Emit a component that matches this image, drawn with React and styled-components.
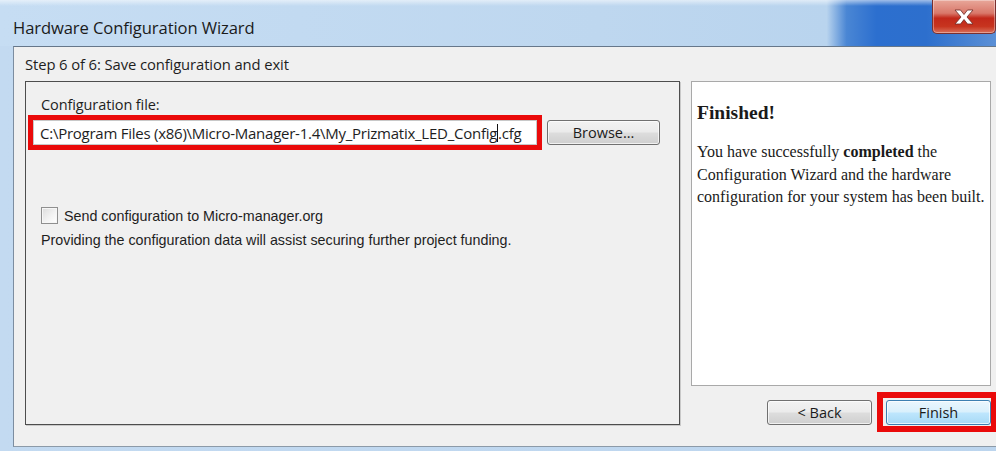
import React from "react";
import styled, { createGlobalStyle } from "styled-components";

const GlobalStyle = createGlobalStyle`
  html, body {
    margin: 0;
    padding: 0;
    background: #bfd7ef;
  }
  * {
    box-sizing: border-box;
  }
`;

const Frame = styled.div`
  width: 996px;
  height: 451px;
  overflow: hidden;
  display: flex;
  flex-direction: column;
  background: linear-gradient(to right, #c3daf1 0%, #bcd5ee 100%);
  font-family: "Open Sans", "Noto Sans", sans-serif;
  color: #1e1e1e;
`;

const TitleBar = styled.div`
  height: 46px;
  flex-shrink: 0;
  display: flex;
  justify-content: space-between;
  padding-left: 13px;
  background:
    linear-gradient(to bottom, rgba(255, 255, 255, 0.55) 0px, rgba(255, 255, 255, 0) 6px),
    linear-gradient(
      to right,
      #c6ddf3 0%,
      #bed7ef 60%,
      #b9d4ee 83%,
      #4a86d4 85%,
      #2c6fcf 88%,
      #2d6fcd 93%,
      #5b90d6 100%
    );
`;

const Title = styled.div`
  align-self: center;
  margin-top: 8px;
  font-size: 16.6px;
  letter-spacing: -0.1px;
  color: #1b1b1b;
`;

const CloseButton = styled.div`
  width: 64px;
  height: 34px;
  border: 1px solid #7a3030;
  border-top: none;
  border-radius: 0 0 5px 5px;
  display: flex;
  align-items: center;
  justify-content: center;
  background: linear-gradient(
    to bottom,
    #e8a79a 0%,
    #d9786a 40%,
    #c2281a 55%,
    #c7341f 80%,
    #d9705a 100%
  );
  box-shadow: inset 0 0 0 1px rgba(255, 255, 255, 0.35);
`;

const Client = styled.div`
  flex: 1;
  margin: 0 0 4px 13px;
  border-top: 1px solid #66778a;
  border-left: 1px solid #7c8da0;
  border-bottom: 1px solid #8c9aa8;
  background: #f0f0f0;
  display: flex;
  flex-direction: column;
  padding: 0 5px 0 11px;
`;

const StepLabel = styled.div`
  height: 34px;
  display: flex;
  align-items: center;
  font-size: 14.8px;
  letter-spacing: -0.1px;
`;

const Body = styled.div`
  display: flex;
  gap: 11px;
`;

const LeftPanel = styled.div`
  width: 655px;
  height: 344px;
  border: 1px solid #4d4d4d;
  box-shadow: 1px 1px 0 #c9c9c9;
  padding: 13px 10px 0 15px;
  display: flex;
  flex-direction: column;
`;

const FieldLabel = styled.div`
  font-size: 14.5px;
  letter-spacing: -0.1px;
  line-height: 19px;
  margin-bottom: 1px;
`;

const FieldRow = styled.div`
  display: flex;
  align-items: center;
  gap: 5px;
  margin-left: -13px;
`;

const Highlight = styled.div`
  border: 5px solid #ea0a0a;
  display: flex;
`;

const PathField = styled.div`
  width: 504px;
  height: 25px;
  background: #fff;
  border: 1px solid #c8c8c8;
  display: flex;
  align-items: center;
  padding-left: 6px;
  font-size: 15px;
  letter-spacing: -0.25px;
  white-space: nowrap;
`;

const Caret = styled.span`
  display: inline-block;
  width: 1px;
  height: 18px;
  background: #111;
  vertical-align: middle;
`;

const Button = styled.div`
  width: ${p => p.w || 105}px;
  height: 25px;
  border: 1px solid ${p => (p.primary ? "#3c7fb1" : "#707070")};
  border-radius: 3px;
  display: flex;
  align-items: center;
  justify-content: center;
  font-size: 14.5px;
  color: #1b1b1b;
  background: ${p =>
    p.primary
      ? "linear-gradient(to bottom, #eaf6fd 0%, #d9f0fc 48%, #bee6fd 52%, #a7d9f5 100%)"
      : "linear-gradient(to bottom, #f2f2f2 0%, #ebebeb 48%, #dddddd 52%, #cfcfcf 100%)"};
  box-shadow: inset 0 0 0 1px rgba(255, 255, 255, 0.7);
`;

const CheckRow = styled.div`
  display: flex;
  align-items: center;
  gap: 6px;
  margin-top: 57px;
  font-family: "Liberation Sans", Arial, sans-serif;
  font-size: 14.3px;
`;

const CheckBox = styled.div`
  width: 17px;
  height: 17px;
  border: 1px solid #8f8f8f;
  background: linear-gradient(135deg, #dcdcdc 0%, #f4f4f4 60%, #ffffff 100%);
  box-shadow: inset 0 0 0 1px #f6f6f6;
`;

const Note = styled.div`
  margin-top: 8px;
  font-family: "Liberation Sans", Arial, sans-serif;
  font-size: 14.3px;
`;

const RightColumn = styled.div`
  width: 300px;
  display: flex;
  flex-direction: column;
`;

const InfoPanel = styled.div`
  height: 305px;
  background: #fff;
  border: 1px solid #a9a9a9;
  padding: 19px 5px 0 5px;
  font-family: "Liberation Serif", "Times New Roman", serif;
  color: #1a1a1a;
`;

const InfoTitle = styled.div`
  font-size: 19.5px;
  font-weight: bold;
  line-height: 24px;
`;

const InfoText = styled.p`
  margin: 16px 0 0;
  font-size: 16px;
  line-height: 22.7px;
`;

const ButtonRow = styled.div`
  display: flex;
  justify-content: flex-end;
  align-items: center;
  gap: 5px;
  margin-top: 6px;
  margin-right: -5px;
`;

const FinishFrame = styled.div`
  border: 6px solid #ea0a0a;
  border-right-width: 5px;
  padding: 2px 0 1px 3px;
  display: flex;
`;

function CloseGlyph() {
  return (
    <svg width="26" height="18" viewBox="0 0 26 18">
      <path
        d="M4 2 L9.5 2 L13 6.5 L16.5 2 L22 2 L16 9 L22 16 L16.5 16 L13 11.5 L9.5 16 L4 16 L10 9 Z"
        fill="#fff"
        stroke="#6c2a24"
        strokeWidth="0.8"
        strokeLinejoin="round"
      />
    </svg>
  );
}

export default function App() {
  return (
    <>
      <GlobalStyle />
      <Frame>
        <TitleBar>
          <Title>Hardware Configuration Wizard</Title>
          <CloseButton>
            <CloseGlyph />
          </CloseButton>
        </TitleBar>
        <Client>
          <StepLabel>Step 6 of 6: Save configuration and exit</StepLabel>
          <Body>
            <LeftPanel>
              <FieldLabel>Configuration file:</FieldLabel>
              <FieldRow>
                <Highlight>
                  <PathField>
                    C:\Program Files (x86)\Micro-Manager-1.4\My_Prizmatix_LED_Config
                    <Caret />
                    .cfg
                  </PathField>
                </Highlight>
                <Button w={113}>Browse...</Button>
              </FieldRow>
              <CheckRow>
                <CheckBox />
                Send configuration to Micro-manager.org
              </CheckRow>
              <Note>
                Providing the configuration data will assist securing further project funding.
              </Note>
            </LeftPanel>
            <RightColumn>
              <InfoPanel>
                <InfoTitle>Finished!</InfoTitle>
                <InfoText>
                  You have successfully <b>completed</b> the Configuration Wizard and the
                  hardware configuration for your system has been built.
                </InfoText>
              </InfoPanel>
              <ButtonRow>
                <Button>&lt; Back</Button>
                <FinishFrame>
                  <Button primary>Finish</Button>
                </FinishFrame>
              </ButtonRow>
            </RightColumn>
          </Body>
        </Client>
      </Frame>
    </>
  );
}
